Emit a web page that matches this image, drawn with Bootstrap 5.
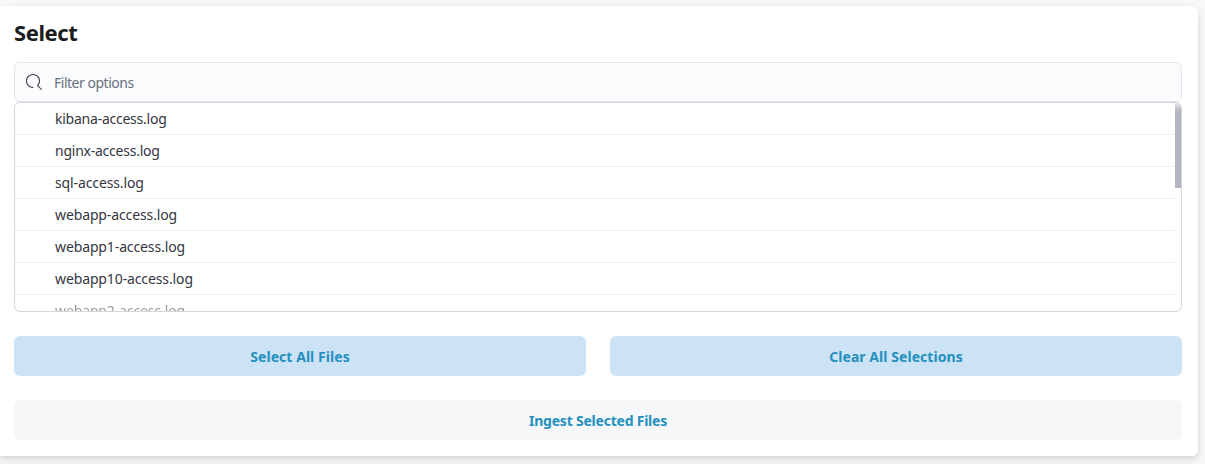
<!DOCTYPE html>
<html lang="en">
<head>
<meta charset="utf-8">
<meta name="viewport" content="width=device-width, initial-scale=1">
<title>Select</title>
<link href="https://cdn.jsdelivr.net/npm/bootstrap@5.3.0/dist/css/bootstrap.min.css" rel="stylesheet">
<style>
body{background:#f8f8f8;font-family:"Noto Sans","Open Sans",sans-serif;font-size:14px;color:#343741;height:464px}
.panel{width:1198px;height:450px;margin-top:6px;padding:10px 16px 16px 14px;border-radius:0 6px 6px 0;box-shadow:0 1px 5px rgba(0,0,0,.08),0 4px 7px rgba(0,0,0,.05),0 6px 15px rgba(0,0,0,.05)}
.panel-title{font-size:22px;line-height:32px;height:46px;color:#1a1c21;font-weight:700;letter-spacing:-.4px}
.search{height:40px;background:#fbfcfe;border:1px solid #e3e5ee;border-radius:6px;padding:0 11px}
.search input{font-size:14px;color:#69707d;letter-spacing:-.48px;box-shadow:none!important}
.search input::placeholder{color:#69707d;opacity:1}
.options{height:210px;border:1px solid #d3d6df;border-radius:6px;padding-right:6px}
.option-row{height:32px;line-height:31px;padding-left:40px;border-bottom:1px solid #edeff3;letter-spacing:-.12px}
.option-row:first-child,.option-row:nth-child(2){letter-spacing:-.24px}
.fade-row{height:16px;overflow:hidden;border:0;-webkit-mask-image:linear-gradient(rgba(0,0,0,.8),rgba(0,0,0,.45))}
.thumb{width:6px;height:85px;top:0;right:0;background:linear-gradient(#e4e5e8,#b3b6c0 8px)}
.action{height:40px;line-height:41px;padding:0;border:0;border-radius:6px;font-size:14px;font-weight:700;color:#2590bd}
.action-fill{background:#cce3f6;letter-spacing:.05px}
.action-muted{background:#f5f7f9;letter-spacing:-.22px}
.actions{gap:24px;margin:24px 0}
</style>
</head>
<body class="overflow-hidden">
<main class="panel bg-white">
<h1 class="panel-title mb-0">Select</h1>
<div class="search d-flex align-items-center">
<svg width="16" height="16" viewBox="0 0 16 16" class="flex-shrink-0" aria-hidden="true"><path fill="#343741" d="M11.271 11.978l3.872 3.873a.502.502 0 00.708 0 .502.502 0 000-.708l-3.565-3.564c2.38-2.747 2.267-6.923-.342-9.532-2.73-2.73-7.17-2.73-9.898 0-2.728 2.729-2.728 7.17 0 9.9a6.955 6.955 0 004.949 2.05.5.5 0 000-1 5.96 5.96 0 01-4.242-1.757 6.01 6.01 0 010-8.486 6.004 6.004 0 018.484 0 6.01 6.01 0 010 8.486.5.5 0 00.034.738z"/></svg>
<input type="text" class="form-control border-0 bg-transparent p-0 ms-2 ps-1" placeholder="Filter options" aria-label="Filter options">
</div>
<div class="options position-relative overflow-hidden">
<div class="option-row"><span>kibana-access.log</span></div>
<div class="option-row"><span>nginx-access.log</span></div>
<div class="option-row"><span>sql-access.log</span></div>
<div class="option-row"><span>webapp-access.log</span></div>
<div class="option-row"><span>webapp1-access.log</span></div>
<div class="option-row"><span>webapp10-access.log</span></div>
<div class="option-row fade-row"><span>webapp2-access.log</span></div>
<div class="thumb position-absolute"></div>
</div>
<div class="actions d-flex">
<button type="button" class="btn action action-fill flex-fill w-50">Select All Files</button>
<button type="button" class="btn action action-fill flex-fill w-50">Clear All Selections</button>
</div>
<button type="button" class="btn action action-muted d-block w-100">Ingest Selected Files</button>
</main>
<script src="https://cdn.jsdelivr.net/npm/bootstrap@5.3.0/dist/js/bootstrap.bundle.min.js"></script>
</body>
</html>
